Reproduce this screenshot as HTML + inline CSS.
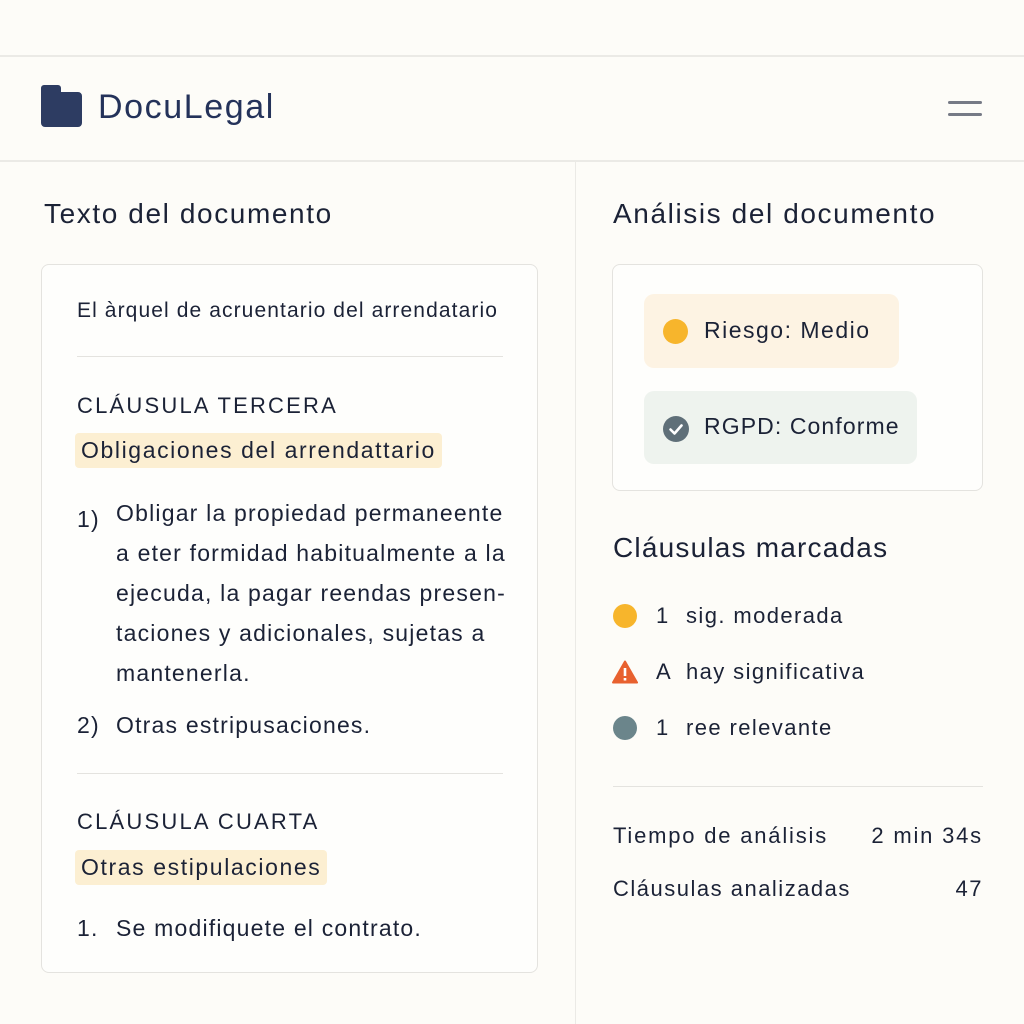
<!DOCTYPE html><html><head><style>
*{margin:0;padding:0;box-sizing:border-box}
body{width:1024px;height:1024px;background:#fdfcf8;font-family:"Liberation Sans",sans-serif;color:#1b2236;position:relative;overflow:hidden;letter-spacing:1.4px}
.a{position:absolute;white-space:nowrap}
.hl{background:#fcefd2;border-radius:4px;padding:4px 6px}
</style></head><body>
<div class="a" style="top:55px;left:0;width:1024px;height:2px;background:#ebeae6"></div>
<div class="a" style="top:160px;left:0;width:1024px;height:2px;background:#ebeae6"></div>
<div class="a" style="top:162px;left:575px;width:1px;height:862px;background:#ebeae6"></div>
<svg class="a" style="left:40px;top:84px" width="45" height="45" viewBox="0 0 45 45"><path d="M4 1h14a3 3 0 0 1 3 3v4h17a4 4 0 0 1 4 4v27a4 4 0 0 1-4 4H5a4 4 0 0 1-4-4V4a3 3 0 0 1 3-3z" fill="#2d3c62"/></svg>
<div class="a" style="left:98px;top:88px;font-size:34px;color:#24325a;letter-spacing:1.6px">DocuLegal</div>
<div class="a" style="left:948px;top:101px;width:34px;height:3px;background:#767a86;border-radius:2px"></div>
<div class="a" style="left:948px;top:113px;width:34px;height:3px;background:#767a86;border-radius:2px"></div>

<div class="a" style="left:44px;top:198px;font-size:28px;letter-spacing:1.6px">Texto del documento</div>
<div class="a" style="left:613px;top:198px;font-size:28px;letter-spacing:1.6px">Análisis del documento</div>

<div class="a" style="left:41px;top:264px;width:497px;height:709px;border:1px solid #e4e3df;border-radius:8px;background:#fefefc"></div>
<div class="a" style="left:77px;top:299px;font-size:21px;letter-spacing:1.1px">El àrquel de acruentario del arrendatario</div>
<div class="a" style="left:77px;top:356px;width:426px;height:1px;background:#e4e3df"></div>
<div class="a" style="left:77px;top:393px;font-size:22px;letter-spacing:2.2px">CLÁUSULA TERCERA</div>
<div class="a hl" style="left:75px;top:433px;font-size:23px;letter-spacing:1.6px">Obligaciones del arrendattario</div>
<div class="a" style="left:77px;top:499px;font-size:23px;line-height:40px;letter-spacing:1.2px">1)</div>
<div class="a" style="left:116px;top:493px;font-size:23px;line-height:40px;letter-spacing:1.2px">Obligar la propiedad permaneente<br>a eter formidad habitualmente a la<br>ejecuda, la pagar reendas presen-<br>taciones y adicionales, sujetas a<br>mantenerla.</div>
<div class="a" style="left:77px;top:712px;font-size:23px;letter-spacing:1.2px">2)</div>
<div class="a" style="left:116px;top:712px;font-size:23px;letter-spacing:1.2px">Otras estripusaciones.</div>
<div class="a" style="left:77px;top:773px;width:426px;height:1px;background:#e4e3df"></div>
<div class="a" style="left:77px;top:809px;font-size:22px;letter-spacing:2.2px">CLÁUSULA CUARTA</div>
<div class="a hl" style="left:75px;top:850px;font-size:23px;letter-spacing:1.6px">Otras estipulaciones</div>
<div class="a" style="left:77px;top:915px;font-size:23px;letter-spacing:1.2px">1.</div>
<div class="a" style="left:116px;top:915px;font-size:23px;letter-spacing:1.2px">Se modifiquete el contrato.</div>

<div class="a" style="left:612px;top:264px;width:371px;height:227px;border:1px solid #e4e3df;border-radius:8px;background:#fefefc"></div>
<div class="a" style="left:644px;top:294px;width:255px;height:74px;background:#fdf3e3;border-radius:10px"></div>
<div class="a" style="left:663px;top:319px;width:25px;height:25px;background:#f7b52c;border-radius:50%"></div>
<div class="a" style="left:704px;top:317px;font-size:23px;letter-spacing:1.5px">Riesgo: Medio</div>
<div class="a" style="left:644px;top:391px;width:273px;height:73px;background:#eef3ee;border-radius:10px"></div>
<svg class="a" style="left:663px;top:416px" width="26" height="26" viewBox="0 0 26 26"><circle cx="13" cy="13" r="13" fill="#5f6f78"/><path d="M7.5 13.5l4 4 7-8" stroke="#fff" stroke-width="2.6" fill="none" stroke-linecap="round" stroke-linejoin="round"/></svg>
<div class="a" style="left:704px;top:413px;font-size:23px;letter-spacing:1.1px">RGPD: Conforme</div>

<div class="a" style="left:613px;top:532px;font-size:28px;letter-spacing:1.2px">Cláusulas marcadas</div>
<div class="a" style="left:613px;top:604px;width:24px;height:24px;background:#f7b52c;border-radius:50%"></div>
<div class="a" style="left:656px;top:603px;font-size:22px">1</div>
<div class="a" style="left:686px;top:603px;font-size:22px">sig. moderada</div>
<svg class="a" style="left:612px;top:660px" width="26" height="24" viewBox="0 0 26 24"><path d="M13 1.5L25 22.5H1z" fill="#e8612f" stroke="#e8612f" stroke-width="2" stroke-linejoin="round"/><rect x="11.7" y="8" width="2.6" height="8" fill="#fff"/><rect x="11.7" y="18" width="2.6" height="2.5" fill="#fff"/></svg>
<div class="a" style="left:656px;top:659px;font-size:22px">A</div>
<div class="a" style="left:686px;top:659px;font-size:22px">hay significativa</div>
<div class="a" style="left:613px;top:716px;width:24px;height:24px;background:#6b858b;border-radius:50%"></div>
<div class="a" style="left:656px;top:715px;font-size:22px">1</div>
<div class="a" style="left:686px;top:715px;font-size:22px">ree relevante</div>
<div class="a" style="left:613px;top:786px;width:370px;height:1px;background:#e4e3df"></div>
<div class="a" style="left:613px;top:823px;font-size:22px;letter-spacing:1.8px">Tiempo de análisis</div>
<div class="a" style="right:41px;top:823px;font-size:22px;letter-spacing:1.8px">2 min 34s</div>
<div class="a" style="left:613px;top:876px;font-size:22px;letter-spacing:1.5px">Cláusulas analizadas</div>
<div class="a" style="right:41px;top:876px;font-size:22px;letter-spacing:1.5px">47</div>
</body></html>
